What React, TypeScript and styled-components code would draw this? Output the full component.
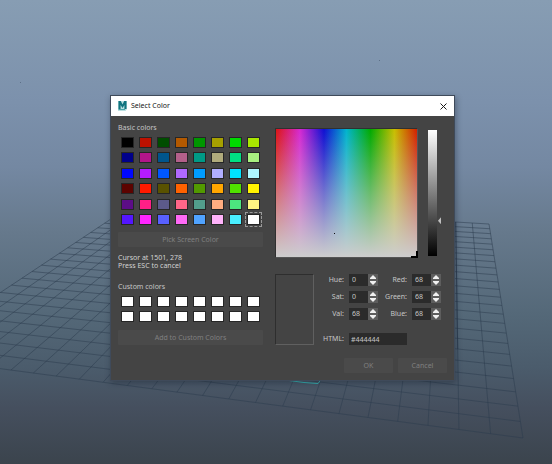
import React, { useState } from "react";
import styled, { createGlobalStyle } from "styled-components";

const GlobalStyle = createGlobalStyle`
  *, *::before, *::after { box-sizing: border-box; }
  body { margin: 0; background: #3b444d; }
  button, input { font: inherit; color: inherit; margin: 0; padding: 0; border: 0; border-radius: 0; }
`;

type Point = [number, number];

const DIVISIONS = 24;
const FLOOR: Point[] = [[135, 203], [489, 224], [523, 438], [-95, 356]];

/* Maps the unit square onto the four corners of the floor in perspective. */
function projector([p0, p1, p2, p3]: Point[]) {
  const dx1 = p1[0] - p2[0], dx2 = p3[0] - p2[0], sx = p0[0] - p1[0] + p2[0] - p3[0];
  const dy1 = p1[1] - p2[1], dy2 = p3[1] - p2[1], sy = p0[1] - p1[1] + p2[1] - p3[1];
  const det = dx1 * dy2 - dx2 * dy1;
  const g = (sx * dy2 - dx2 * sy) / det;
  const h = (dx1 * sy - sx * dy1) / det;
  const a = p1[0] - p0[0] + g * p1[0], b = p3[0] - p0[0] + h * p3[0];
  const d = p1[1] - p0[1] + g * p1[1], e = p3[1] - p0[1] + h * p3[1];
  return (u: number, v: number): Point => {
    const w = g * u + h * v + 1;
    return [(a * u + b * v + p0[0]) / w, (d * u + e * v + p0[1]) / w];
  };
}

const project = projector(FLOOR);
const segment = (from: Point, to: Point) => `M${from.join(" ")}L${to.join(" ")}`;
const gridPath = Array.from({ length: DIVISIONS + 1 }, (_, i) => i / DIVISIONS)
  .map((t) => segment(project(t, 0), project(t, 1)) + segment(project(0, t), project(1, t)))
  .join("");

const BASIC = [
  "#000000", "#bd1100", "#004d00", "#b35900", "#009600", "#a6a000", "#00d900", "#a9e600",
  "#00008a", "#b3158a", "#00558c", "#b3608a", "#009a86", "#b0ab7c", "#00e083", "#a8f080",
  "#0008ff", "#b41cff", "#0057ff", "#b069ff", "#009cff", "#b0aeff", "#00e3ff", "#aef6ff",
  "#5c0300", "#ff1a00", "#595200", "#ff6200", "#529900", "#ffa600", "#50e000", "#fff200",
  "#5c0d87", "#ff1f87", "#5c5a8a", "#ff6688", "#529d8b", "#ffad80", "#4ce67e", "#fff582",
  "#5416ff", "#ff25ff", "#5860ff", "#ff69f5", "#50a3ff", "#ffb3fa", "#49eeff", "#ffffff",
];

const Stage = styled.main`
  position: relative;
  min-height: 100vh;
  padding: 96px 98px 84px 111px;
  overflow: hidden;
  background: linear-gradient(#879db3 0%, #7c91ac 22%, #7488a2 36%, #66798c 50%, #546878 68%, #4b5c6c 79%, #454f5e 88%, #3b444d 100%);
  font-family: "Noto Sans", "Open Sans", sans-serif;
  font-size: 7px;
  line-height: 8px;
  color: #c6c6c6;
`;

const Floor = styled.svg`
  position: absolute;
  top: 0;
  left: 0;
`;

const Dialog = styled.section`
  position: relative;
  background: #444444;
  box-shadow: 0 0 0 1px #3f4a5a, 1px 2px 6px 1px rgba(20, 28, 40, 0.4);
`;

const TitleBar = styled.header`
  display: flex;
  align-items: center;
  gap: 4px;
  height: 20px;
  padding: 0 7px;
  background: #ffffff;
  color: #161616;
`;

const Title = styled.h1`
  flex: 1;
  margin: 0;
  font-size: 7px;
  font-weight: 400;
`;

const CloseButton = styled.button`
  display: flex;
  background: none;
`;

const Body = styled.div`
  display: grid;
  grid-template-columns: 145px 1fr;
  column-gap: 12px;
  padding: 7px;
`;

const Palette = styled.div`
  display: flex;
  flex-direction: column;
`;

const Heading = styled.h2`
  margin: 0 0 5px;
  font-size: 7px;
  font-weight: 400;
  line-height: 9px;
`;

const Swatches = styled.div<{ $height: number }>`
  display: grid;
  grid-template-columns: repeat(8, 13px);
  align-content: space-between;
  justify-content: space-between;
  height: ${(p) => p.$height}px;
  padding: 0 3px;
`;

const Swatch = styled.button<{ $color: string; $selected?: boolean }>`
  height: 11px;
  border: 1px solid #262626;
  background: ${(p) => p.$color};
  outline: ${(p) => (p.$selected ? "1px dashed #999999" : "none")};
  outline-offset: 1px;
`;

const FlatButton = styled.button`
  height: 15px;
  border-radius: 1px;
  background: #4a4a4a;
  color: #808080;
`;

const PickButton = styled(FlatButton)`
  margin: 7px 0;
`;

const AddButton = styled(FlatButton)`
  margin-top: 8px;
`;

const Status = styled.p`
  margin: 0 0 12px;
  color: #d2d2d2;
`;

const Picker = styled.div`
  display: flex;
  flex-direction: column;
  justify-content: space-between;
  padding: 5px 6px 0 0;
`;

const FieldRow = styled.div`
  display: flex;
  align-items: center;
  gap: 10px;
  height: 130px;
`;

const HueField = styled.div`
  position: relative;
  flex: 1;
  height: 130px;
  border: 1px solid #303030;
  border-right-color: #555555;
  border-bottom-color: #555555;
  background:
    linear-gradient(rgba(205, 205, 205, 0), rgba(205, 205, 205, 0.52) 50%, #cdcdcd),
    linear-gradient(90deg, #dc1414 0%, #d628d2 17%, #0f0fd2 34%, #00b4cd 50%, #00aa00 67%, #c8be00 84%, #d21e00 100%);
`;

const Crosshair = styled.svg`
  position: absolute;
  right: -1px;
  bottom: -1px;
`;

const Cursor = styled.span`
  position: absolute;
  left: 41%;
  top: 81%;
  width: 1px;
  height: 1px;
  background: #101010;
`;

const ValueSlider = styled.input`
  appearance: none;
  writing-mode: vertical-lr;
  direction: rtl;
  width: 13px;
  height: 126px;
  background: linear-gradient(#ffffff, #000000) left / 9px 100% no-repeat;

  &::-webkit-slider-runnable-track {
    width: 13px;
    height: 126px;
  }

  &::-webkit-slider-thumb {
    appearance: none;
    width: 3px;
    height: 7px;
    margin-left: 10px;
    background: #c0c0c0;
    clip-path: polygon(0 50%, 100% 0, 100% 100%);
  }
`;

const Lower = styled.div`
  display: flex;
  height: 71px;
`;

const Preview = styled.div`
  width: 39px;
  border: 1px solid #2e2e2e;
  border-right-color: #606060;
  border-bottom-color: #606060;
  background: #444444;
`;

const Form = styled.form`
  flex: 1;
  display: grid;
  grid-template-columns: 30px 29px 1fr 29px;
  grid-template-rows: repeat(3, 12px) 1fr;
  gap: 5px;
  align-items: center;
`;

const Label = styled.label<{ $low?: boolean }>`
  justify-self: end;
  align-self: ${(p) => (p.$low ? "end" : "center")};
  line-height: 12px;
`;

const Spin = styled.div`
  display: grid;
  grid-template-columns: 1fr 10px;
  grid-template-rows: 6px 6px;
  background: #2b2b2b;
`;

const SpinInput = styled.input`
  grid-row: span 2;
  min-width: 0;
  width: 100%;
  padding-left: 3px;
  background: none;
  outline: none;
`;

const StepButton = styled.button`
  display: flex;
  align-items: center;
  justify-content: center;
  background: #5d5d5d;
`;

const HtmlInput = styled.input`
  grid-column: 2 / 4;
  align-self: end;
  width: 100%;
  height: 12px;
  padding-left: 2px;
  background: #2b2b2b;
  outline: none;
`;

const Footer = styled.footer`
  display: flex;
  justify-content: flex-end;
  gap: 5px;
  padding: 6px 7px 7px;
`;

const FooterButton = styled(FlatButton)`
  width: 49px;
`;

function Arrow({ down }: { down?: boolean }) {
  return (
    <svg width="6" height="4" viewBox="0 0 6 4" aria-hidden="true">
      <path d={down ? "M0 0H6V1L3 4L0 1Z" : "M0 4H6V3L3 0L0 3Z"} fill="#f0f0f0" />
    </svg>
  );
}

function NumberField({ name, initial }: { name: string; initial: number }) {
  const [value, setValue] = useState(initial);
  const id = `field-${name.toLowerCase()}`;
  return (
    <>
      <Label htmlFor={id}>{name}:</Label>
      <Spin>
        <SpinInput id={id} value={value} onChange={(e) => setValue(Number(e.target.value) || 0)} />
        <StepButton type="button" aria-label={`Increase ${name}`} onClick={() => setValue(value + 1)}>
          <Arrow />
        </StepButton>
        <StepButton type="button" aria-label={`Decrease ${name}`} onClick={() => setValue(Math.max(0, value - 1))}>
          <Arrow down />
        </StepButton>
      </Spin>
    </>
  );
}

function MayaLogo() {
  return (
    <svg width="9" height="10" viewBox="0 0 9 10" aria-hidden="true">
      <path d="M0 0H9V8L7.5 10H0Z" fill="#b9dfe0" />
      <path d="M0.5 0H2.8L4.5 3.4L6.2 0H8.5V8H6.4V4L4.5 7L2.6 4V8H0.5Z" fill="#11747f" />
      <path d="M0.5 8.5H7" stroke="#4aa5a8" strokeWidth="1" />
    </svg>
  );
}

export default function App() {
  const [html, setHtml] = useState("#444444");
  const [level, setLevel] = useState(68);
  return (
    <Stage>
      <GlobalStyle />
      <Floor width="552" height="464" viewBox="0 0 552 464" aria-hidden="true">
        <path d={gridPath} fill="none" stroke="#2b3b4d" strokeWidth="1" strokeOpacity="0.5" />
        <path d={segment(project(22 / 24, 0), project(22 / 24, 0.75))} stroke="#26364a" strokeOpacity="0.5" />
        <path d="M289 380.500L304 382.500L318 383.500L320 381" fill="none" stroke="#35b5b5" />
        <path d="M379 60h1v1h-1zM20 82h1v1h-1z" fill="#5d7088" />
      </Floor>
      <Dialog role="dialog" aria-labelledby="dialog-title">
        <TitleBar>
          <MayaLogo />
          <Title id="dialog-title">Select Color</Title>
          <CloseButton aria-label="Close">
            <svg width="7" height="7" viewBox="0 0 7 7" aria-hidden="true">
              <path d="M0.5 0.5L6.5 6.5M6.5 0.5L0.5 6.5" stroke="#1a1a1a" strokeWidth="1" />
            </svg>
          </CloseButton>
        </TitleBar>
        <Body>
          <Palette>
            <Heading>Basic colors</Heading>
            <Swatches $height={88}>
              {BASIC.map((c) => (
                <Swatch key={c} $color={c} $selected={c === "#ffffff"} aria-label={c} />
              ))}
            </Swatches>
            <PickButton>Pick Screen Color</PickButton>
            <Status>
              Cursor at 1501, 278
              <br />
              Press ESC to cancel
            </Status>
            <Heading>Custom colors</Heading>
            <Swatches $height={26}>
              {Array.from({ length: 16 }, (_, i) => (
                <Swatch key={i} $color="#ffffff" aria-label={`Custom color ${i + 1}`} />
              ))}
            </Swatches>
            <AddButton>Add to Custom Colors</AddButton>
          </Palette>
          <Picker>
            <FieldRow>
              <HueField>
                <Cursor />
                <Crosshair width="7" height="7" viewBox="0 0 7 7" aria-hidden="true">
                  <path d="M0 6H6V0" fill="none" stroke="#000000" strokeWidth="2" />
                </Crosshair>
              </HueField>
              <ValueSlider
                type="range"
                min={0}
                max={255}
                value={level}
                onChange={(e) => setLevel(Number(e.target.value))}
                aria-label="Value"
              />
            </FieldRow>
            <Lower>
              <Preview />
              <Form>
                <NumberField name="Hue" initial={0} />
                <NumberField name="Red" initial={68} />
                <NumberField name="Sat" initial={0} />
                <NumberField name="Green" initial={68} />
                <NumberField name="Val" initial={68} />
                <NumberField name="Blue" initial={68} />
                <Label htmlFor="field-html" $low>HTML:</Label>
                <HtmlInput id="field-html" value={html} onChange={(e) => setHtml(e.target.value)} />
              </Form>
            </Lower>
          </Picker>
        </Body>
        <Footer>
          <FooterButton>OK</FooterButton>
          <FooterButton>Cancel</FooterButton>
        </Footer>
      </Dialog>
    </Stage>
  );
}
